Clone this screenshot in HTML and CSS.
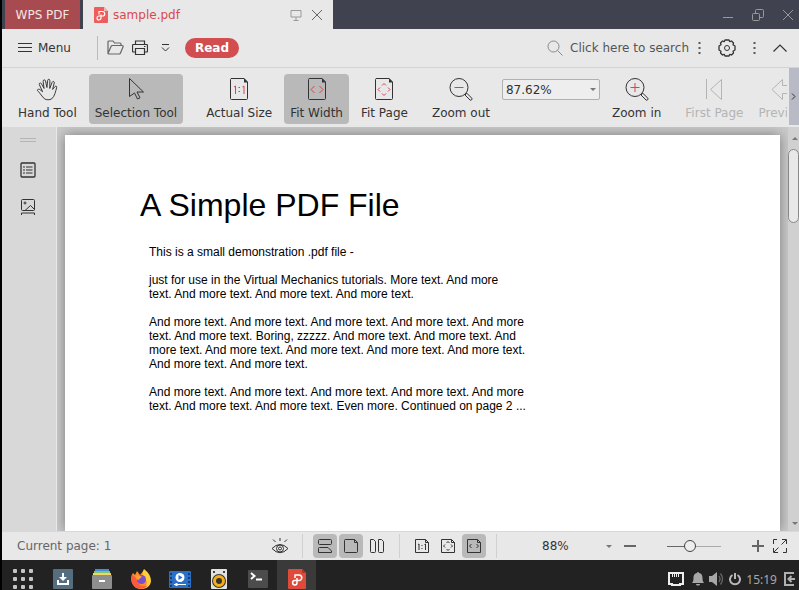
FILE: index.html
```html
<!doctype html>
<html lang="en">
  <head>
    <meta charset="UTF-8" />
    <meta name="viewport" content="width=device-width, initial-scale=1.0" />
    <title>sample.pdf - WPS PDF</title>
    <link rel="stylesheet" href="styles.css">
  </head>
  <body>
    <header class="title-bar">
      <button class="home-tab">WPS PDF</button>
      <div class="file-tab">
        <svg class="pdf-icon" width="14" height="16" viewBox="0 0 14 16">
          <path d="M1 0h9l4 4v11a1 1 0 0 1-1 1H1a1 1 0 0 1-1-1V1a1 1 0 0 1 1-1z" fill="#ee5c5c" />
          <path d="M10 0l4 4h-4z" fill="#f9b4b0" />
          <path d="M5 7.500V4.500h3.500a2 2 0 0 1 0 4.500H5a2 2 0 1 0 2 2V7.500" fill="none" stroke="#fff" stroke-width="1.200" />
        </svg>
        <span class="file-name">sample.pdf</span>
        <button class="icon-btn muted" aria-label="Present">
          <svg width="12" height="12" viewBox="0 0 12 12">
            <path d="M1 1.500h10v6.500h-10zM6 8v3M3.500 11.500h5" />
          </svg>
        </button>
        <button class="icon-btn" aria-label="Close tab">
          <svg width="12" height="12" viewBox="0 0 12 12"><path d="M1 1l10 10M11 1L1 11" /></svg>
        </button>
      </div>
      <div class="window-buttons">
        <button class="icon-btn" aria-label="Minimize">
          <svg width="12" height="12" viewBox="0 0 12 12"><path d="M1 8.500h10" /></svg>
        </button>
        <button class="icon-btn" aria-label="Restore">
          <svg width="12" height="12" viewBox="0 0 12 12">
            <rect x="0.500" y="4.500" width="7" height="7" rx="1" />
            <path d="M3.500 4.500v-3a1 1 0 0 1 1-1h6a1 1 0 0 1 1 1v6a1 1 0 0 1-1 1h-3" />
          </svg>
        </button>
        <button class="icon-btn" aria-label="Close">
          <svg width="12" height="12" viewBox="0 0 12 12"><path d="M1 1l10 10M11 1L1 11" /></svg>
        </button>
      </div>
    </header>

    <nav class="menu-bar">
      <button class="menu-btn">
        <svg width="14" height="12" viewBox="0 0 14 12"><path d="M0 1.500h14M0 5.500h14M0 9.500h14" /></svg>
        Menu
      </button>
      <div class="quick-access">
        <button class="icon-btn soft" aria-label="Open">
          <svg width="17" height="16" viewBox="0 0 17 16">
            <path d="M1 13.500V2a1 1 0 0 1 1-1h4l1.500 2H13a1 1 0 0 1 1 1v1.500M1 13.500l3-7a1.500 1.500 0 0 1 1.500-1H15a1 1 0 0 1 1 1.500l-2.500 6a1.500 1.500 0 0 1-1.500 1H1.500z" stroke-width="1.200" />
          </svg>
        </button>
        <button class="icon-btn" aria-label="Print">
          <svg width="16" height="16" viewBox="0 0 16 16">
            <path d="M3.500 4V1h9v3M3.500 12H1.500a1 1 0 0 1-1-1V5.500a1 1 0 0 1 1-1h13a1 1 0 0 1 1 1V11a1 1 0 0 1-1 1h-2M3.500 8.500h9v6h-9zM12 6.500h1.500" stroke-width="1.200" />
          </svg>
        </button>
        <button class="icon-btn more-btn" aria-label="More">
          <svg width="9" height="8" viewBox="0 0 9 8"><path d="M1 0.500h7M1 3.500l3.500 3.500L8 3.500" /></svg>
        </button>
        <button class="read-btn">Read</button>
      </div>
      <label class="search">
        <svg width="16" height="16" viewBox="0 0 16 16"><circle cx="6.500" cy="6.500" r="5.500" /><path d="M10.500 10.500l5 5" /></svg>
        <input type="text" aria-label="Search" placeholder="Click here to search">
      </label>
      <div class="menu-tools">
        <button class="icon-btn dots" aria-label="Search options">
          <svg width="3" height="14" viewBox="0 0 3 14"><path d="M1.500 1v2M1.500 6v2M1.500 11v2" /></svg>
        </button>
        <button class="icon-btn" aria-label="Settings">
          <svg width="18" height="18" viewBox="0 0 18 18">
            <path d="M7 1h4l.8 1.700L13.500 2l2 2-.5 1.800L17 7v4l-2 1.200.5 1.800-2 2-1.700-.7L11 17H7l-.8-1.700-1.700.7-2-2 .5-1.800L1 11V7l2-1.200L2.500 4l2-2 1.700.7z" stroke-width="1.300" stroke-linejoin="round" />
            <circle cx="9" cy="9" r="2.500" />
          </svg>
        </button>
        <button class="icon-btn dots" aria-label="More options">
          <svg width="3" height="14" viewBox="0 0 3 14"><path d="M1.500 1v2M1.500 6v2M1.500 11v2" /></svg>
        </button>
        <button class="icon-btn" aria-label="Collapse toolbar">
          <svg width="14" height="8" viewBox="0 0 14 8"><path d="M0.500 7.500L7 1l6.500 6.500" stroke-width="1.200" /></svg>
        </button>
      </div>
    </nav>

    <div class="toolbar">
      <div class="tool-list">
        <div class="tool-group pointer-tools">
          <button class="tool">
            <svg width="24" height="24" viewBox="0 0 24 24">
              <path d="M9 22c-2-2-3.500-4-5-6-1-1.500-2-2-2.500-3 0-1.500 2-1.500 3-.5l2.500 2L3.500 7c-.5-2 1.500-2.500 2.200-1L8.500 11 7.500 3.500c0-2 2-2 2.500-.5l1.500 7 .8-7.500c.2-1.700 2.300-1.500 2.300.2L14.500 11l2.500-6.500c.7-1.500 2.500-1 2.200.7L17.500 12l2.500-3c1-1 2.300-.2 1.700 1.300C20.500 14 20 19 16.500 22c-2 1.200-5.500 1.200-7.500 0z" transform="translate(1 1) scale(.95)" />
            </svg>
            Hand Tool
          </button>
          <button class="tool active">
            <svg width="24" height="24" viewBox="0 0 24 24">
              <path d="M5.500 1.500v18l5-3.500 3 6 2.500-1.200-3-5.800h6.500z" stroke-linejoin="round" />
            </svg>
            Selection Tool
          </button>
        </div>
        <div class="tool-group">
          <button class="tool">
            <svg width="24" height="24" viewBox="0 0 24 24">
              <path d="M4 1.500h13l3.500 3.500v16.500a1 1 0 0 1-1 1h-15a1 1 0 0 1-1-1V2.500z" />
              <path class="fill" d="M17 1v4.500h4z" />
              <path class="red" d="M7 10l1.500-1v8M15.500 10l1.500-1v8M11.500 10.500h1.500M11.500 14.500h1.500" />
            </svg>
            Actual Size
          </button>
          <button class="tool active">
            <svg width="24" height="24" viewBox="0 0 24 24">
              <path d="M4 1.500h13l3.500 3.500v16.500a1 1 0 0 1-1 1h-15a1 1 0 0 1-1-1V2.500z" />
              <path class="fill" d="M17 1v4.500h4z" />
              <path class="red" d="M9.500 9L6 12.500 9.500 16M14.500 9l3.500 3.500-3.500 3.500" />
            </svg>
            Fit Width
          </button>
          <button class="tool">
            <svg width="24" height="24" viewBox="0 0 24 24">
              <path d="M4 1.500h13l3.500 3.500v16.500a1 1 0 0 1-1 1h-15a1 1 0 0 1-1-1V2.500z" />
              <path class="fill" d="M17 1v4.500h4z" />
              <path class="red" d="M8 10.500l-2 2 2 2M16 10.500l2 2-2 2M10 8.500l2-2 2 2M10 16.500l2 2 2-2" />
            </svg>
            Fit Page
          </button>
        </div>
        <div class="tool-group">
          <button class="tool">
            <svg width="24" height="24" viewBox="0 0 24 24">
              <circle cx="10" cy="10.500" r="9" />
              <path d="M16 18l1.800-1.800 5 5a1.300 1.300 0 0 1-1.800 1.800z" />
              <path class="red" d="M5.500 10.500h9" />
            </svg>
            Zoom out
          </button>
          <div class="select-box">
            <select class="zoom-select" aria-label="Zoom level">
              <option>87.62%</option>
              <option>100%</option>
              <option>150%</option>
            </select>
          </div>
          <button class="tool">
            <svg width="24" height="24" viewBox="0 0 24 24">
              <circle cx="10" cy="10.500" r="9" />
              <path d="M16 18l1.800-1.800 5 5a1.300 1.300 0 0 1-1.800 1.800z" />
              <path class="red" d="M5.500 10.500h9M10 6v9" />
            </svg>
            Zoom in
          </button>
        </div>
        <div class="tool-group page-tools">
          <button class="tool" disabled>
            <svg width="24" height="24" viewBox="0 0 24 24"><path d="M4.500 2v20M19.500 2.500v20L8.500 12.500z" /></svg>
            First Page
          </button>
          <button class="tool prev-page" disabled>
            <svg width="24" height="24" viewBox="0 0 24 24">
              <path d="M12.500 2.500L2 12.500l10.500 10v-6h9v-8h-9z" />
            </svg>
            Previous Page
          </button>
        </div>
      </div>
      <button class="scroll-right" aria-label="Scroll toolbar">
        <svg width="6" height="7" viewBox="0 0 6 7"><path d="M1 0.500l3 3-3 3" /></svg>
      </button>
    </div>

    <main class="workspace">
      <aside class="side-bar">
        <span class="grip"></span>
        <button class="icon-btn" aria-label="Bookmarks">
          <svg width="16" height="16" viewBox="0 0 16 16">
            <rect x="1" y="1" width="14" height="14" rx="1" stroke-width="1.300" />
            <path d="M3 5h2M3 8h2M3 11h2M6 5h6.500M6 8h6.500M6 11h6.500" />
          </svg>
        </button>
        <button class="icon-btn" aria-label="Thumbnails">
          <svg width="16" height="18" viewBox="0 0 16 18">
            <rect x="1.500" y="1.500" width="13" height="11" rx="1" />
            <circle cx="5" cy="5" r="1" />
            <path d="M5 12.500L10.500 7.500l4 4M1.500 17v-2h13v2" />
          </svg>
        </button>
      </aside>
      <div class="canvas">
        <article class="page">
          <h1>A Simple PDF File</h1>
          <p>This is a small demonstration .pdf file -</p>
          <p>
            just for use in the Virtual Mechanics tutorials. More text. And more<br>
            text. And more text. And more text. And more text.
          </p>
          <p>
            And more text. And more text. And more text. And more text. And more<br>
            text. And more text. Boring, zzzzz. And more text. And more text. And<br>
            more text. And more text. And more text. And more text. And more text.<br>
            And more text. And more text.
          </p>
          <p>
            And more text. And more text. And more text. And more text. And more<br>
            text. And more text. And more text. Even more. Continued on page 2 ...
          </p>
        </article>
      </div>
      <div class="scroll-bar">
        <span class="arrow-up"></span>
        <span class="thumb"></span>
        <span class="arrow-down"></span>
      </div>
    </main>

    <footer class="status-bar">
      <span class="current-page">Current page: 1</span>
      <button class="icon-btn eye" aria-label="Eye protection">
        <svg width="18" height="18" viewBox="0 0 18 18">
          <path d="M1 11.500Q9 3.500 17 11.500Q9 20 1 11.500z" />
          <circle cx="9" cy="11.500" r="3.500" />
          <circle cx="9" cy="11.500" r="1.500" />
          <path d="M9 4V1M4.500 5L2 2.500M13.500 5L16 2.500" />
        </svg>
      </button>
      <div class="status-group">
        <button class="view-btn active" aria-label="Continuous view">
          <svg width="16" height="16" viewBox="0 0 16 16">
            <rect x="1.500" y="1.500" width="13" height="5" rx="1" />
            <path d="M1.500 14.500v-4a1 1 0 0 1 1-1h8.500l3.500 3.500v1.500z" />
          </svg>
        </button>
        <button class="view-btn active" aria-label="Single page">
          <svg width="16" height="16" viewBox="0 0 16 16">
            <path d="M2.500 1.500h9l3 3v9a1 1 0 0 1-1 1h-11a1 1 0 0 1-1-1v-11a1 1 0 0 1 1-1z" /><path d="M11.500 1.500v3h3" />
          </svg>
        </button>
        <button class="view-btn" aria-label="Two pages">
          <svg width="16" height="16" viewBox="0 0 16 16">
            <path d="M1.500 1.500h3l2 2v10a1 1 0 0 1-1 1h-3a1 1 0 0 1-1-1zM9.500 1.500h3l2 2v10a1 1 0 0 1-1 1h-3a1 1 0 0 1-1-1z" />
          </svg>
        </button>
      </div>
      <div class="status-group">
        <button class="view-btn" aria-label="Actual size">
          <svg width="16" height="16" viewBox="0 0 16 16">
            <path d="M1.500 1.500h10l3 3v10h-13zM11.500 1.500v3h3M4 6.500l1-.5v6M10.500 6.500l1-.5v6M7.500 7.500h1M7.500 10.500h1" />
          </svg>
        </button>
        <button class="view-btn" aria-label="Fit page">
          <svg width="16" height="16" viewBox="0 0 16 16">
            <path d="M1.500 1.500h10l3 3v10h-13zM11.500 1.500v3h3M5 6.500L3.500 8 5 9.500M11 6.500L12.500 8 11 9.500M6.500 5L8 3.500 9.500 5M6.500 11L8 12.500 9.500 11" />
          </svg>
        </button>
        <button class="view-btn active" aria-label="Fit width">
          <svg width="16" height="16" viewBox="0 0 16 16">
            <path d="M1.500 1.500h10l3 3v10h-13zM11.500 1.500v3h3M5.500 6L3.500 8l2 2M10.500 6l2 2-2 2" />
          </svg>
        </button>
      </div>
      <div class="status-zoom">
        <div class="select-box">
          <select class="percent-select" aria-label="Zoom">
            <option>88%</option>
            <option>100%</option>
          </select>
        </div>
        <button class="icon-btn soft" aria-label="Zoom out">
          <svg width="12" height="12" viewBox="0 0 12 12"><path d="M0 6h12" stroke-width="2" /></svg>
        </button>
        <input type="range" class="zoom-slider" aria-label="Zoom slider" min="0" max="100" value="40">
        <button class="icon-btn soft" aria-label="Zoom in">
          <svg width="12" height="12" viewBox="0 0 12 12"><path d="M0 6h12M6 0v12" stroke-width="2" /></svg>
        </button>
        <button class="icon-btn" aria-label="Full screen">
          <svg width="16" height="16" viewBox="0 0 16 16">
            <path d="M1.500 6V1.500H5M10 1.500h4.500V6M14.500 10v4.500H11M6 14.500H1.500V10M14 2L9.500 6.500M2 14l4.500-4.500" />
          </svg>
        </button>
      </div>
    </footer>

    <div class="task-bar">
      <button class="task apps" aria-label="Applications">
        <svg width="20" height="20" viewBox="0 0 20 20">
          <rect width="4" height="4" rx="1" /><rect x="8" width="4" height="4" rx="1" /><rect x="16" width="4" height="4" rx="1" />
          <rect y="8" width="4" height="4" rx="1" /><rect x="8" y="8" width="4" height="4" rx="1" /><rect x="16" y="8" width="4" height="4" rx="1" />
          <rect y="16" width="4" height="4" rx="1" /><rect x="8" y="16" width="4" height="4" rx="1" /><rect x="16" y="16" width="4" height="4" rx="1" />
        </svg>
      </button>
      <button class="task" aria-label="Downloads">
        <svg width="20" height="20" viewBox="0 0 20 20">
          <rect width="20" height="20" rx="1" fill="#546e80" />
          <path d="M9 4h2v4h3l-4 4-4-4h3zM4 11h2v3h8v-3h2v5H4z" fill="#fff" />
        </svg>
      </button>
      <button class="task" aria-label="Files">
        <svg width="20" height="20" viewBox="0 0 20 20">
          <rect x="3" width="14" height="4" fill="#3f8fde" />
          <rect x="2" y="2" width="16" height="4" fill="#7cc576" />
          <rect x="1" y="4" width="18" height="4" fill="#f6d55f" />
          <rect y="6" width="20" height="14" rx="1" fill="#8e8e8e" />
          <rect x="7" y="11" width="6" height="2" fill="#fff" />
        </svg>
      </button>
      <button class="task" aria-label="Firefox">
        <svg width="20" height="20" viewBox="0 0 20 20">
          <path d="M2 4l2 2 2-4 3 4 4-5 4 5c3 4 4 9 0 12-4 3-11 3-14-1C0 14-1 8 2 4z" fill="#ff8a2a" />
          <path d="M13 0c4 3 7 7 7 12-1 4-3 6-6 7 3-5 2-8-1-10-2-2-2-5 0-9z" fill="#ffce3a" />
          <path d="M1 6c-2 5 0 12 7 13.500 4 .5 7-1 8.500-3-5 2-9 0-9.500-4L4 8z" fill="#fb5a3c" />
          <circle cx="10.500" cy="10.500" r="4.500" fill="#7a50c8" />
          <path d="M5 7c3-1 5 0 6 1-1 1-3 1-3 3-2 0-3-2-3-4z" fill="#ffa030" />
        </svg>
      </button>
      <button class="task" aria-label="Media player">
        <svg width="22" height="20" viewBox="0 0 22 20">
          <rect y="2" width="22" height="17" rx="1" fill="#2a70c8" />
          <path d="M1 4h2v2H1zM1 8h2v2H1zM1 12h2v2H1zM1 16h2v2H1zM19 4h2v2h-2zM19 8h2v2h-2zM19 12h2v2h-2zM19 16h2v2h-2z" fill="#173c6c" />
          <circle cx="11" cy="8.500" r="4.500" fill="#fff" />
          <path d="M9.500 6v5l4-2.500z" fill="#2a70c8" />
          <path d="M5 15.500h12" stroke="#fff" /><circle cx="7.500" cy="15.500" r="1.500" fill="#fff" />
        </svg>
      </button>
      <button class="task" aria-label="Music">
        <svg width="16" height="20" viewBox="0 0 16 20">
          <rect width="16" height="20" rx="1" fill="#e4e2de" />
          <circle cx="8" cy="12" r="7" fill="#333" />
          <circle cx="8" cy="12" r="4.500" fill="none" stroke="#f5ae16" stroke-width="3" />
          <path d="M2 2h2v2H2zM12 2h2v2h-2z" fill="#444" />
        </svg>
      </button>
      <button class="task" aria-label="Terminal">
        <svg width="20" height="20" viewBox="0 0 20 20">
          <rect y="1" width="20" height="18" rx="1" fill="#4c4c4c" />
          <path d="M3 4l3.500 3L3 10M8 10.500h6" fill="none" stroke="#fff" stroke-width="2" />
        </svg>
      </button>
      <button class="task running" aria-label="WPS PDF">
        <svg width="18" height="20" viewBox="0 0 18 20">
          <path d="M1 0h13l4 4v15a1 1 0 0 1-1 1H1a1 1 0 0 1-1-1V1a1 1 0 0 1 1-1z" fill="#e04a3a" />
          <path d="M14 0l4 4h-4z" fill="#b53327" />
          <path d="M7 9V6h4a2.500 2.500 0 0 1 0 5.500H6.500a2.200 2.200 0 1 0 2.500 2.200V9" fill="none" stroke="#fff" stroke-width="1.500" />
        </svg>
      </button>
      <div class="tray">
        <svg width="16" height="14" viewBox="0 0 16 14">
          <path d="M1 1h14v11h-3v1H4v-1H1z" fill="none" stroke="#eee" stroke-width="2" />
          <path d="M4.500 2v3M6.500 2v3M8.500 2v3M10.500 2v3" stroke="#eee" />
        </svg>
        <svg class="bell" width="12" height="14" viewBox="0 0 12 14" fill="#a8a8a8">
          <path d="M6 0c1 0 1 1 1 1 3 .5 3.500 3 3.500 5 0 3 .5 3.500 1.500 5H0c1-1.500 1.500-2 1.500-5 0-2 .5-4.500 3.500-5 0 0 0-1 1-1zM4 12h4c0 2-4 2-4 0z" />
        </svg>
        <svg width="15" height="14" viewBox="0 0 15 14">
          <path d="M0 4h3l5-4v14l-5-4H0z" fill="#a8a8a8" />
          <path d="M10 4q2 3 0 6M11.500 1.500q4 5.500 0 11" fill="none" stroke="#666" stroke-width="1.300" />
        </svg>
        <svg width="12" height="14" viewBox="0 0 12 14">
          <path d="M3.500 3a5 5 0 1 0 5 0M6 1v6" fill="none" stroke="#b8b8b8" stroke-width="2" />
        </svg>
        <time class="clock">15:19</time>
        <svg class="log-out" width="12" height="14" viewBox="0 0 12 14">
          <path d="M10 1H1v12h9M11 7H5M7.500 4L4.500 7l3 3" fill="none" stroke="#b0b0b0" stroke-width="2" />
        </svg>
      </div>
    </div>
  </body>
</html>
```

FILE: styles.css
```css
* {
  margin: 0;
  padding: 0;
  box-sizing: border-box;
}

body {
  font-family: 'DejaVu Sans', sans-serif;
  font-size: 12px;
  color: #333;
  background: #e8e8e8;
  border-left: 2px solid #000;
  height: 100vh;
  display: flex;
  flex-direction: column;
  overflow: hidden;
}

button,
input,
select {
  font: inherit;
  color: inherit;
  background: none;
  border: none;
}

svg {
  display: block;
  flex: none;
}

button svg,
.search svg {
  fill: none;
  stroke: currentColor;
}

.task svg {
  stroke: none;
}

.icon-btn {
  display: flex;
  flex: none;
}

/* Title bar */
.title-bar {
  flex: none;
  height: 29px;
  display: flex;
  background: #40434f;
  padding-left: 3px;
}

.home-tab {
  width: 75px;
  margin-right: 3px;
  background: #a84b50;
  color: #f4e4e4;
}

.file-tab {
  width: 250px;
  padding: 0 10px 0 11px;
  display: flex;
  align-items: center;
  gap: 9px;
  background: #e8e8e8;
  color: #666;
}

.file-name {
  flex: 1;
  color: #d9484d;
}

.file-tab .pdf-icon {
  margin-right: -4px;
}

.muted {
  color: #999;
}

.window-buttons {
  margin-left: auto;
  padding-right: 5px;
  display: flex;
  align-items: center;
  gap: 18px;
  color: #999;
}

/* Menu bar */
.menu-bar {
  flex: none;
  height: 39px;
  padding: 0 12px 0 16px;
  display: flex;
  align-items: center;
  border-bottom: 1px solid #d4d4d4;
}

.menu-btn {
  display: flex;
  align-items: center;
  gap: 6px;
}

.quick-access {
  height: 24px;
  margin-left: 26px;
  padding-left: 9px;
  display: flex;
  align-items: center;
  gap: 8px;
  border-left: 1px solid #bbb;
}

.soft {
  color: #666;
}

.more-btn {
  padding: 0 7px 0 5px;
}

.read-btn {
  height: 20px;
  width: 54px;
  border-radius: 10px;
  background: #d14d50;
  color: #fff;
  font-weight: 700;
}

.search {
  margin-left: auto;
  display: flex;
  align-items: center;
  gap: 7px;
  color: #888;
}

.search input {
  width: 128px;
}

.search input::placeholder {
  color: #555;
}

.menu-tools {
  display: flex;
  align-items: center;
  gap: 17px;
}

.dots svg {
  stroke-width: 2;
  opacity: 0.8;
}

/* Toolbar */
.toolbar {
  flex: none;
  height: 59px;
  display: flex;
}

.tool-list {
  flex: 1;
  min-width: 0;
  margin-right: 2px;
  padding: 6px 0 0 10px;
  display: flex;
  align-items: flex-start;
  gap: 12px;
  overflow: hidden;
}

.tool-group {
  flex: none;
  display: flex;
  gap: 6px;
}

.pointer-tools {
  margin-right: 5px;
}

.page-tools {
  gap: 3px;
}

.tool {
  height: 50px;
  padding: 3px 6px 2px;
  display: flex;
  flex-direction: column;
  align-items: center;
  gap: 5px;
  border-radius: 4px;
  white-space: nowrap;
}

.tool.active {
  background: #b9b9b9;
}

.tool:disabled {
  color: #b4b4b4;
}

.tool .red {
  stroke: #d9444a;
}

.tool .fill {
  fill: currentColor;
  stroke: none;
}

.tool.prev-page {
  align-items: flex-start;
}

.prev-page svg {
  margin-left: 12px;
}

/* Drop-downs with a small triangle */
.select-box {
  display: grid;
  align-self: center;
}

.select-box select,
.select-box::after {
  grid-area: 1 / 1;
}

.select-box select {
  appearance: none;
  padding: 0 3px;
}

.select-box::after {
  content: '';
  align-self: center;
  justify-self: end;
  margin-right: 4px;
  border: 3px solid transparent;
  border-top-color: #777;
  border-bottom: none;
  pointer-events: none;
}

.tool-group .select-box {
  margin-top: 5px;
  align-self: flex-start;
}

.select-box .zoom-select {
  width: 98px;
  height: 21px;
  border: 1px solid #b0b0b0;
  border-radius: 2px;
  background: #eee;
}

.percent-select {
  width: 77px;
}

.scroll-right {
  flex: none;
  width: 10px;
  height: 57px;
  display: flex;
  align-items: center;
  justify-content: center;
  background: #b8bac5;
}

/* Document area */
.workspace {
  flex: 1;
  min-height: 0;
  display: flex;
  background: #cacaca;
}

.side-bar {
  flex: none;
  width: 55px;
  padding: 11px 2px 0 0;
  display: flex;
  flex-direction: column;
  align-items: center;
  gap: 20px;
  background: #d8d8d8;
  border-right: 1px solid #e8e8e8;
}

.grip {
  width: 16px;
  height: 4px;
  border: 1px solid #b4b4b4;
  border-width: 1px 0;
}

.canvas {
  flex: 1;
  padding: 8px 8px 0;
  overflow: hidden;
}

.page {
  height: 100%;
  padding: 51px 75px 0;
  background: #fff;
  box-shadow: 0 0 12px rgba(0, 0, 0, 0.4);
  color: #000;
  font-family: 'Liberation Sans', Arial, sans-serif;
  font-size: 12px;
  line-height: 14px;
}

.page h1 {
  margin-bottom: 20px;
  font-size: 32px;
  font-weight: 400;
  line-height: 39px;
}

.page p {
  margin-bottom: 14px;
  padding-left: 9px;
  white-space: nowrap;
}

.scroll-bar {
  flex: none;
  width: 11px;
  padding: 10px 0 6px;
  display: flex;
  flex-direction: column;
  align-items: flex-end;
  background: #d0d0d0;
  overflow: hidden;
}

.arrow-up,
.arrow-down {
  border: 3px solid transparent;
  margin-right: 1px;
}

.arrow-up {
  border-bottom-color: #777;
  border-top: none;
}

.arrow-down {
  margin-top: auto;
  border-top-color: #777;
  border-bottom: none;
}

.thumb {
  width: 11px;
  height: 74px;
  margin-top: 9px;
  border: 1px solid #888;
  border-radius: 6px;
  background: #e8e8e8;
}

/* Status bar */
.status-bar {
  flex: none;
  height: 29px;
  padding: 0 10px 0 15px;
  display: flex;
  align-items: center;
  border-top: 1px solid #d8d8d8;
}

.current-page {
  width: 254px;
  color: #666;
}

.eye {
  margin-right: 13px;
}

.status-group {
  height: 24px;
  width: 97px;
  padding-left: 10px;
  display: flex;
  gap: 2px;
  border-left: 1px solid #d0d0d0;
}

.view-btn {
  width: 24px;
  height: 24px;
  display: flex;
  align-items: center;
  justify-content: center;
  border-radius: 4px;
}

.view-btn.active {
  background: #b9b9b9;
}

.status-zoom {
  flex: 1;
  height: 24px;
  padding-left: 42px;
  display: flex;
  align-items: center;
  gap: 8px;
  border-left: 1px solid #d0d0d0;
}

.zoom-slider {
  appearance: none;
  width: 54px;
  height: 12px;
  margin: 0 23px;
  background: linear-gradient(90deg, #666 50%, #aaa 50%) center / 100% 1px no-repeat;
}

.zoom-slider::-webkit-slider-thumb {
  appearance: none;
  width: 12px;
  height: 12px;
  border: 1px solid #444;
  border-radius: 50%;
  background: #eee;
}

/* Desktop task bar */
.task-bar {
  flex: none;
  height: 30px;
  display: flex;
  background: #222;
  overflow: hidden;
}

.task {
  width: 39px;
  padding-top: 9px;
  display: flex;
  justify-content: center;
}

.apps {
  width: 41px;
}

.apps svg {
  fill: #c4c4c4;
}

.running {
  background: #3a3a3a;
}

.tray {
  margin-left: auto;
  padding: 8px 3px 0 0;
  display: flex;
  align-items: center;
  gap: 5px;
  color: #a8a8a8;
}

.bell {
  margin-left: 3px;
}

.log-out {
  margin-left: 2px;
}

.clock {
  font-family: 'Noto Sans', sans-serif;
}
```
